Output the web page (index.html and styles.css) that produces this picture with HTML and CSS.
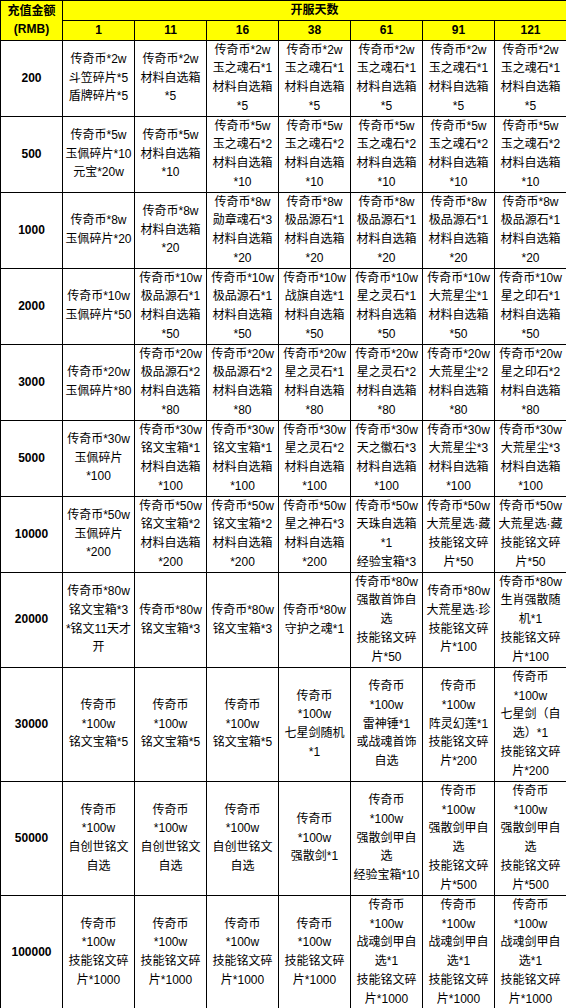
FILE: index.html
```html
<!DOCTYPE html>
<html lang="zh-CN">
<head>
<meta charset="utf-8">
<title>充值奖励</title>
<link rel="stylesheet" href="styles.css">
</head>
<body>
<table class="grid">
  <colgroup>
    <col class="c0"><col class="cd"><col class="cd"><col class="cd"><col class="cd"><col class="cd"><col class="cd"><col class="cd">
  </colgroup>
  <thead>
    <tr class="h1">
      <th class="head corner" rowspan="2">充值金额<br>(RMB)</th>
      <th class="head" colspan="7">开服天数</th>
    </tr>
    <tr class="h2">
      <th class="head">1</th><th class="head">11</th><th class="head">16</th><th class="head">38</th><th class="head">61</th><th class="head">91</th><th class="head">121</th>
    </tr>
  </thead>
  <tbody>
    <tr class="r4">
      <th class="amt">200</th>
      <td>传奇币*2w<br>斗笠碎片*5<br>盾牌碎片*5</td>
      <td>传奇币*2w<br>材料自选箱<br>*5</td>
      <td>传奇币*2w<br>玉之魂石*1<br>材料自选箱<br>*5</td>
      <td>传奇币*2w<br>玉之魂石*1<br>材料自选箱<br>*5</td>
      <td>传奇币*2w<br>玉之魂石*1<br>材料自选箱<br>*5</td>
      <td>传奇币*2w<br>玉之魂石*1<br>材料自选箱<br>*5</td>
      <td>传奇币*2w<br>玉之魂石*1<br>材料自选箱<br>*5</td>
    </tr>
    <tr class="r4">
      <th class="amt">500</th>
      <td>传奇币*5w<br>玉佩碎片*10<br>元宝*20w</td>
      <td>传奇币*5w<br>材料自选箱<br>*10</td>
      <td>传奇币*5w<br>玉之魂石*2<br>材料自选箱<br>*10</td>
      <td>传奇币*5w<br>玉之魂石*2<br>材料自选箱<br>*10</td>
      <td>传奇币*5w<br>玉之魂石*2<br>材料自选箱<br>*10</td>
      <td>传奇币*5w<br>玉之魂石*2<br>材料自选箱<br>*10</td>
      <td>传奇币*5w<br>玉之魂石*2<br>材料自选箱<br>*10</td>
    </tr>
    <tr class="r4">
      <th class="amt">1000</th>
      <td>传奇币*8w<br>玉佩碎片*20</td>
      <td>传奇币*8w<br>材料自选箱<br>*20</td>
      <td>传奇币*8w<br>勋章魂石*3<br>材料自选箱<br>*20</td>
      <td>传奇币*8w<br>极品源石*1<br>材料自选箱<br>*20</td>
      <td>传奇币*8w<br>极品源石*1<br>材料自选箱<br>*20</td>
      <td>传奇币*8w<br>极品源石*1<br>材料自选箱<br>*20</td>
      <td>传奇币*8w<br>极品源石*1<br>材料自选箱<br>*20</td>
    </tr>
    <tr class="r4">
      <th class="amt">2000</th>
      <td>传奇币*10w<br>玉佩碎片*50</td>
      <td>传奇币*10w<br>极品源石*1<br>材料自选箱<br>*50</td>
      <td>传奇币*10w<br>极品源石*1<br>材料自选箱<br>*50</td>
      <td>传奇币*10w<br>战旗自选*1<br>材料自选箱<br>*50</td>
      <td>传奇币*10w<br>星之灵石*1<br>材料自选箱<br>*50</td>
      <td>传奇币*10w<br>大荒星尘*1<br>材料自选箱<br>*50</td>
      <td>传奇币*10w<br>星之印石*1<br>材料自选箱<br>*50</td>
    </tr>
    <tr class="r4">
      <th class="amt">3000</th>
      <td>传奇币*20w<br>玉佩碎片*80</td>
      <td>传奇币*20w<br>极品源石*2<br>材料自选箱<br>*80</td>
      <td>传奇币*20w<br>极品源石*2<br>材料自选箱<br>*80</td>
      <td>传奇币*20w<br>星之灵石*1<br>材料自选箱<br>*80</td>
      <td>传奇币*20w<br>星之灵石*2<br>材料自选箱<br>*80</td>
      <td>传奇币*20w<br>大荒星尘*2<br>材料自选箱<br>*80</td>
      <td>传奇币*20w<br>星之印石*2<br>材料自选箱<br>*80</td>
    </tr>
    <tr class="r4">
      <th class="amt">5000</th>
      <td>传奇币*30w<br>玉佩碎片<br>*100</td>
      <td>传奇币*30w<br>铭文宝箱*1<br>材料自选箱<br>*100</td>
      <td>传奇币*30w<br>铭文宝箱*1<br>材料自选箱<br>*100</td>
      <td>传奇币*30w<br>星之灵石*2<br>材料自选箱<br>*100</td>
      <td>传奇币*30w<br>天之徽石*3<br>材料自选箱<br>*100</td>
      <td>传奇币*30w<br>大荒星尘*3<br>材料自选箱<br>*100</td>
      <td>传奇币*30w<br>大荒星尘*3<br>材料自选箱<br>*100</td>
    </tr>
    <tr class="r4">
      <th class="amt">10000</th>
      <td>传奇币*50w<br>玉佩碎片<br>*200</td>
      <td>传奇币*50w<br>铭文宝箱*2<br>材料自选箱<br>*200</td>
      <td>传奇币*50w<br>铭文宝箱*2<br>材料自选箱<br>*200</td>
      <td>传奇币*50w<br>星之神石*3<br>材料自选箱<br>*200</td>
      <td>传奇币*50w<br>天珠自选箱<br>*1<br>经验宝箱*3</td>
      <td>传奇币*50w<br>大荒星选·藏<br>技能铭文碎<br>片*50</td>
      <td>传奇币*50w<br>大荒星选·藏<br>技能铭文碎<br>片*50</td>
    </tr>
    <tr class="r5">
      <th class="amt">20000</th>
      <td>传奇币*80w<br>铭文宝箱*3<br>*铭文11天才<br>开</td>
      <td>传奇币*80w<br>铭文宝箱*3</td>
      <td>传奇币*80w<br>铭文宝箱*3</td>
      <td>传奇币*80w<br>守护之魂*1</td>
      <td>传奇币*80w<br>强散首饰自<br>选<br>技能铭文碎<br>片*50</td>
      <td>传奇币*80w<br>大荒星选·珍<br>技能铭文碎<br>片*100</td>
      <td>传奇币*80w<br>生肖强散随<br>机*1<br>技能铭文碎<br>片*100</td>
    </tr>
    <tr class="r6">
      <th class="amt">30000</th>
      <td>传奇币<br>*100w<br>铭文宝箱*5</td>
      <td>传奇币<br>*100w<br>铭文宝箱*5</td>
      <td>传奇币<br>*100w<br>铭文宝箱*5</td>
      <td>传奇币<br>*100w<br>七星剑随机<br>*1</td>
      <td>传奇币<br>*100w<br>雷神锤*1<br>或战魂首饰<br>自选</td>
      <td>传奇币<br>*100w<br>阵灵幻莲*1<br>技能铭文碎<br>片*200</td>
      <td>传奇币<br>*100w<br>七星剑（自<br>选）*1<br>技能铭文碎<br>片*200</td>
    </tr>
    <tr class="r6">
      <th class="amt">50000</th>
      <td>传奇币<br>*100w<br>自创世铭文<br>自选</td>
      <td>传奇币<br>*100w<br>自创世铭文<br>自选</td>
      <td>传奇币<br>*100w<br>自创世铭文<br>自选</td>
      <td>传奇币<br>*100w<br>强散剑*1</td>
      <td>传奇币<br>*100w<br>强散剑甲自<br>选<br>经验宝箱*10</td>
      <td>传奇币<br>*100w<br>强散剑甲自<br>选<br>技能铭文碎<br>片*500</td>
      <td>传奇币<br>*100w<br>强散剑甲自<br>选<br>技能铭文碎<br>片*500</td>
    </tr>
    <tr class="r6">
      <th class="amt">100000</th>
      <td>传奇币<br>*100w<br>技能铭文碎<br>片*1000</td>
      <td>传奇币<br>*100w<br>技能铭文碎<br>片*1000</td>
      <td>传奇币<br>*100w<br>技能铭文碎<br>片*1000</td>
      <td>传奇币<br>*100w<br>技能铭文碎<br>片*1000</td>
      <td>传奇币<br>*100w<br>战魂剑甲自<br>选*1<br>技能铭文碎<br>片*1000</td>
      <td>传奇币<br>*100w<br>战魂剑甲自<br>选*1<br>技能铭文碎<br>片*1000</td>
      <td>传奇币<br>*100w<br>战魂剑甲自<br>选*1<br>技能铭文碎<br>片*1000</td>
    </tr>
  </tbody>
</table>
</body>
</html>
```

FILE: styles.css
```css
html, body {
  margin: 0;
  padding: 0;
  background: #ffffff;
}

.grid {
  border-collapse: collapse;
  table-layout: fixed;
  width: 566px;
  font-family: "Liberation Sans", "Noto Sans CJK SC", sans-serif;
  font-size: 12px;
  color: #000000;
}

.c0 { width: 62px; }
.cd { width: 72px; }

.grid th,
.grid td {
  border: 1px solid #000000;
  padding: 0;
  text-align: center;
  vertical-align: middle;
  line-height: 18.75px;
  white-space: nowrap;
  overflow: visible;
}

.grid th {
  font-weight: bold;
}

.head {
  background: #ffff00;
}

.h1, .h2 { height: 19px; }
.r4 { height: 76px; }
.r5 { height: 95px; }
.r6 { height: 114px; }

.amt {
  background: #ffffff;
}
```
